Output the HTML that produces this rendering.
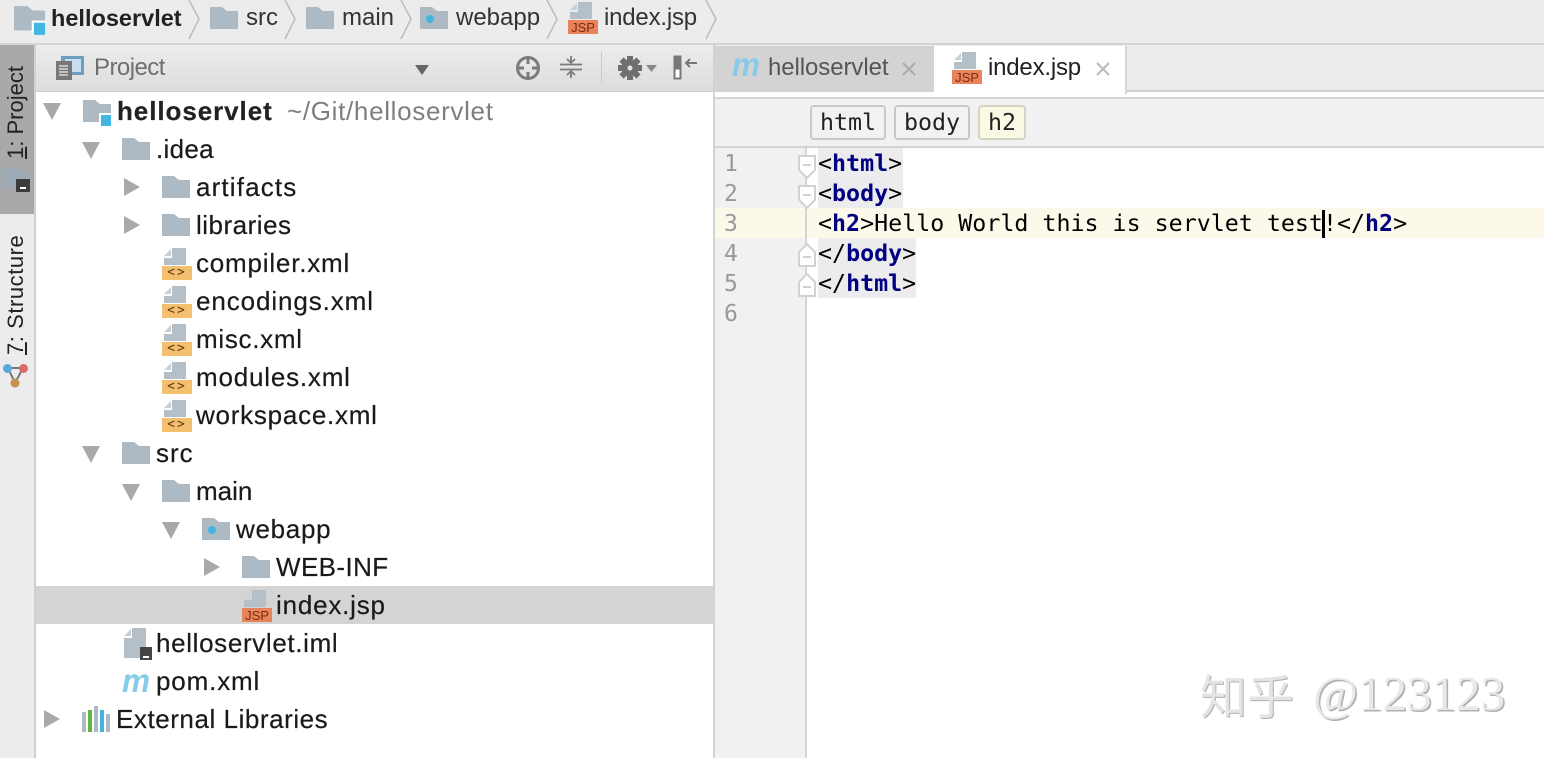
<!DOCTYPE html>
<html><head><meta charset="utf-8"><style>
html,body{margin:0;padding:0}
body{width:1544px;height:758px;overflow:hidden;background:#fff;position:relative;font-family:"Liberation Sans","Noto Sans CJK SC",sans-serif;color:#1c1c1c}
.a,.t,.c,.m,svg.i{position:absolute}
.a{display:block}
.t{font-size:26px;letter-spacing:.7px;line-height:38px;height:38px;white-space:nowrap;color:#1a1a1a;-webkit-text-stroke:.2px #1a1a1a}
.c{font-size:24px;line-height:30px;white-space:nowrap}
.m{font-family:"DejaVu Sans Mono",monospace;font-size:23.3px;line-height:30px;white-space:pre;color:#000}
.m b{color:#000080;font-weight:bold}
.n{position:absolute;left:724px;width:14px;font-family:"DejaVu Sans Mono",monospace;font-size:23px;line-height:30px;color:#999}
.tag{position:absolute;top:105px;height:35px;box-sizing:border-box;border:2px solid #c8c8c8;border-radius:4px;background:#f2f2f2;font-family:"DejaVu Sans Mono",monospace;font-size:23.3px;line-height:31px;text-align:center;color:#222}
.hl{position:absolute;background:#ececee}
.v{position:absolute;transform-origin:0 0;transform:rotate(-90deg);font-size:22px;line-height:26px;white-space:nowrap;color:#222}
.v u{text-decoration:underline}
.x{position:absolute;width:30px;height:14px;background:#f4bf6f;color:#5a3a10;font:13px/14px 'DejaVu Sans Mono',monospace;letter-spacing:2px;text-align:center}
.j{position:absolute;width:30px;height:14px;background:#e8835a;color:#7a2c10;font-size:13px;line-height:15px;text-align:center}
</style></head><body>
<svg width="0" height="0" style="position:absolute">
<defs>
<symbol id="fo" viewBox="0 0 28 22"><path d="M0 0H12L17 4H28V22H0Z" fill="#aebac3"/></symbol>
<symbol id="mod" viewBox="0 0 28 26"><path d="M0 0H12L17 4H28V22H0Z" fill="#aebac3"/><rect x="16" y="13" width="12" height="13" fill="#fff"/><rect x="18" y="15" width="10" height="11" fill="#40b6e0"/></symbol>
<symbol id="web" viewBox="0 0 28 22"><path d="M0 0H12L17 4H28V22H0Z" fill="#aebac3"/><circle cx="10" cy="12" r="4" fill="#40b6e0"/></symbol>
<symbol id="pg" viewBox="0 0 22 17"><path d="M8 0H22V17H0V10H8Z" fill="#b4bfc7"/><path d="M7 1V8H0Z" fill="#c9d1d7"/></symbol>
<symbol id="d" viewBox="0 0 18 17"><path d="M0 0H18L9 17Z" fill="#a9a9a9"/></symbol>
<symbol id="r" viewBox="0 0 16 18"><path d="M0 0L16 9L0 18Z" fill="#a9a9a9"/></symbol>
<symbol id="mm" viewBox="0 0 28 24"><text x="0" y="21" font-family="Liberation Sans" font-style="italic" font-weight="bold" font-size="33" fill="#86cbe8" textLength="28" lengthAdjust="spacingAndGlyphs">m</text></symbol>
<symbol id="fold1" viewBox="0 0 20 26"><path d="M2 2H18V16L10 24L2 16Z" fill="#fff" stroke="#d2d2d2" stroke-width="2"/><path d="M6 11H14" stroke="#d2d2d2" stroke-width="2"/></symbol>
<symbol id="fold2" viewBox="0 0 20 26"><path d="M2 24H18V10L10 2L2 10Z" fill="#fff" stroke="#d2d2d2" stroke-width="2"/><path d="M6 15H14" stroke="#d2d2d2" stroke-width="2"/></symbol>
</defs></svg>

<!-- top breadcrumb -->
<div class="a" style="left:0;top:0;width:1544px;height:45px;background:#ececec;border-bottom:2px solid #d4d4d4;box-sizing:border-box"></div>
<svg class="i" style="left:14px;top:6px" width="31" height="29"><use href="#mod" width="31" height="29"/></svg>
<div class="c" style="left:51px;top:3px;font-weight:bold;font-size:23.5px;color:#222">helloservlet</div>
<svg class="i" style="left:187px;top:0" width="14" height="40"><path d="M2 0L12 19L2 39" fill="none" stroke="#bcbcbc" stroke-width="1.5"/></svg>
<svg class="i" style="left:210px;top:7px" width="28" height="22"><use href="#fo" width="28" height="22"/></svg>
<div class="c" style="left:246px;top:3px;color:#333">src</div>
<svg class="i" style="left:283px;top:0" width="14" height="40"><path d="M2 0L12 19L2 39" fill="none" stroke="#bcbcbc" stroke-width="1.5"/></svg>
<svg class="i" style="left:306px;top:7px" width="28" height="22"><use href="#fo" width="28" height="22"/></svg>
<div class="c" style="left:342px;top:3px;color:#333">main</div>
<svg class="i" style="left:399px;top:0" width="14" height="40"><path d="M2 0L12 19L2 39" fill="none" stroke="#bcbcbc" stroke-width="1.5"/></svg>
<svg class="i" style="left:420px;top:7px" width="28" height="22"><use href="#web" width="28" height="22"/></svg>
<div class="c" style="left:456px;top:3px;color:#333">webapp</div>
<svg class="i" style="left:545px;top:0" width="14" height="40"><path d="M2 0L12 19L2 39" fill="none" stroke="#bcbcbc" stroke-width="1.5"/></svg>
<svg class="i" style="left:570px;top:2px" width="22" height="17"><use href="#pg" width="22" height="17"/></svg>
<div class="j" style="left:568px;top:20px">JSP</div>
<div class="c" style="left:604px;top:3px;color:#333;letter-spacing:-.2px">index.jsp</div>
<svg class="i" style="left:704px;top:0" width="14" height="40"><path d="M2 0L12 19L2 39" fill="none" stroke="#bcbcbc" stroke-width="1.5"/></svg>

<!-- left strip -->
<div class="a" style="left:0;top:45px;width:34px;height:713px;background:#ececec"></div>
<div class="a" style="left:0;top:45px;width:34px;height:169px;background:#a9a9a9"></div>
<div class="a" style="left:34px;top:45px;width:2px;height:713px;background:#d0d0d0"></div>
<div class="v" style="left:3px;top:159px"><u>1</u>: Project</div>
<div class="v" style="left:3px;top:355px;letter-spacing:.55px"><u>7</u>: Structure</div>
<svg class="i" style="left:2px;top:168px" width="28" height="24"><path d="M0 0H12L17 3H26V20H0Z" fill="#9eabb6"/><rect x="14" y="11" width="14" height="13" fill="#3c3c3c"/><rect x="18" y="19" width="6" height="2" fill="#fff"/></svg>
<svg class="i" style="left:2px;top:362px" width="28" height="28"><path d="M6 6H21L13 21Z" fill="none" stroke="#777" stroke-width="2"/><circle cx="5.500" cy="6.500" r="4.500" fill="#5aa9dc"/><circle cx="21.500" cy="6.500" r="4.500" fill="#e0696c"/><circle cx="13" cy="21" r="4.500" fill="#c8904f"/></svg>

<!-- project header -->
<div class="a" style="left:36px;top:45px;width:677px;height:47px;background:linear-gradient(#ededed,#dcdcdc);border-bottom:1px solid #cfcfcf;box-sizing:border-box"></div>
<svg class="i" style="left:55px;top:55px" width="30" height="26"><rect x="6" y="1" width="23" height="19" fill="#6d9dc0"/><rect x="10" y="4" width="16" height="13" fill="#c7dff0"/><rect x="1" y="6" width="16" height="19" fill="#777"/><path d="M4 11H13M4 14H13M4 17H13M4 20H13" stroke="#eee" stroke-width="1.200"/></svg>
<div class="c" style="left:94px;top:53px;color:#6f6f6f;letter-spacing:-.55px">Project</div>
<svg class="i" style="left:415px;top:65px" width="14" height="10"><path d="M0 0H14L7 10Z" fill="#666"/></svg>
<svg class="i" style="left:515px;top:55px" width="26" height="26" fill="none" stroke="#7a7a7a" stroke-width="3"><circle cx="13" cy="13" r="10.500"/><path d="M13 2V9M13 17V24M2 13H9M17 13H24"/></svg>
<svg class="i" style="left:558px;top:54px" width="26" height="26" fill="none" stroke="#7a7a7a" stroke-width="1.800"><path d="M2 10.500H24M2 15.500H24M13 2V8M13 18V24"/><path d="M9 5L13 9L17 5M9 21L13 17L17 21" stroke-width="1.600"/></svg>
<div class="a" style="left:601px;top:52px;width:1px;height:30px;background:#c9c9c9"></div>
<svg class="i" style="left:618px;top:56px" width="26" height="26"><g fill="#6f6f6f"><circle cx="12" cy="12" r="8.500"/><path d="M9 0H15V24H9ZM0 9H24V15H0Z"/><path d="M9 0H15V24H9ZM0 9H24V15H0Z" transform="rotate(45 12 12)"/></g><circle cx="12" cy="12" r="2.500" fill="#e4e4e4"/></svg>
<svg class="i" style="left:646px;top:65px" width="11" height="7"><path d="M0 0H11L5.500 7Z" fill="#888"/></svg>
<svg class="i" style="left:673px;top:55px" width="26" height="26"><rect x="1.500" y="1.500" width="6" height="22" fill="#fff" stroke="#777" stroke-width="2"/><rect x="1.500" y="1.500" width="6" height="13" fill="#777"/><path d="M24 8H13M17 4L13 8L17 12" fill="none" stroke="#777" stroke-width="2"/></svg>
<div class="a" style="left:713px;top:45px;width:2px;height:713px;background:#d2d2d2"></div>

<!-- tree -->
<div class="a" style="left:36px;top:586px;width:677px;height:38px;background:#d4d4d4"></div>

<svg class="i" style="left:43px;top:103px" width="18" height="17"><use href="#d" width="18" height="17"/></svg>
<svg class="i" style="left:82px;top:100px" width="30" height="26"><use href="#mod" width="30" height="26"/></svg>
<div class="t" style="left:117px;top:92px;font-weight:bold;color:#222;letter-spacing:.93px">helloservlet</div>
<div class="t" style="left:287px;top:92px;color:#7f7f7f;-webkit-text-stroke:0;letter-spacing:.68px">~/Git/helloservlet</div>

<svg class="i" style="left:82px;top:142px" width="18" height="17"><use href="#d" width="18" height="17"/></svg>
<svg class="i" style="left:122px;top:138px" width="28" height="22"><use href="#fo" width="28" height="22"/></svg>
<div class="t" style="left:156px;top:130px;letter-spacing:.3px">.idea</div>

<svg class="i" style="left:124px;top:178px" width="16" height="18"><use href="#r" width="16" height="18"/></svg>
<svg class="i" style="left:162px;top:176px" width="28" height="22"><use href="#fo" width="28" height="22"/></svg>
<div class="t" style="left:196px;top:168px;letter-spacing:1.15px">artifacts</div>

<svg class="i" style="left:124px;top:216px" width="16" height="18"><use href="#r" width="16" height="18"/></svg>
<svg class="i" style="left:162px;top:214px" width="28" height="22"><use href="#fo" width="28" height="22"/></svg>
<div class="t" style="left:196px;top:206px;letter-spacing:.5px">libraries</div>

<svg class="i" style="left:164px;top:248px" width="22" height="17"><use href="#pg" width="22" height="17"/></svg>
<div class="x" style="left:162px;top:266px">&lt;&gt;</div>
<div class="t" style="left:196px;top:244px;letter-spacing:.8px">compiler.xml</div>

<svg class="i" style="left:164px;top:286px" width="22" height="17"><use href="#pg" width="22" height="17"/></svg>
<div class="x" style="left:162px;top:304px">&lt;&gt;</div>
<div class="t" style="left:196px;top:282px;letter-spacing:.9px">encodings.xml</div>

<svg class="i" style="left:164px;top:324px" width="22" height="17"><use href="#pg" width="22" height="17"/></svg>
<div class="x" style="left:162px;top:342px">&lt;&gt;</div>
<div class="t" style="left:196px;top:320px">misc.xml</div>

<svg class="i" style="left:164px;top:362px" width="22" height="17"><use href="#pg" width="22" height="17"/></svg>
<div class="x" style="left:162px;top:380px">&lt;&gt;</div>
<div class="t" style="left:196px;top:358px;letter-spacing:.8px">modules.xml</div>

<svg class="i" style="left:164px;top:400px" width="22" height="17"><use href="#pg" width="22" height="17"/></svg>
<div class="x" style="left:162px;top:418px">&lt;&gt;</div>
<div class="t" style="left:196px;top:396px;letter-spacing:.75px">workspace.xml</div>

<svg class="i" style="left:82px;top:446px" width="18" height="17"><use href="#d" width="18" height="17"/></svg>
<svg class="i" style="left:122px;top:442px" width="28" height="22"><use href="#fo" width="28" height="22"/></svg>
<div class="t" style="left:156px;top:434px;letter-spacing:1px">src</div>

<svg class="i" style="left:122px;top:484px" width="18" height="17"><use href="#d" width="18" height="17"/></svg>
<svg class="i" style="left:162px;top:480px" width="28" height="22"><use href="#fo" width="28" height="22"/></svg>
<div class="t" style="left:196px;top:472px;letter-spacing:0">main</div>

<svg class="i" style="left:162px;top:522px" width="18" height="17"><use href="#d" width="18" height="17"/></svg>
<svg class="i" style="left:202px;top:518px" width="28" height="22"><use href="#web" width="28" height="22"/></svg>
<div class="t" style="left:236px;top:510px">webapp</div>

<svg class="i" style="left:204px;top:558px" width="16" height="18"><use href="#r" width="16" height="18"/></svg>
<svg class="i" style="left:242px;top:556px" width="28" height="22"><use href="#fo" width="28" height="22"/></svg>
<div class="t" style="left:276px;top:548px;letter-spacing:.4px">WEB-INF</div>

<svg class="i" style="left:244px;top:590px" width="22" height="17"><use href="#pg" width="22" height="17"/></svg>
<div class="j" style="left:242px;top:608px">JSP</div>
<div class="t" style="left:276px;top:586px;letter-spacing:.8px">index.jsp</div>

<svg class="i" style="left:124px;top:628px" width="30" height="32"><path d="M8 0H22V30H0V10H8Z" fill="#b4bfc7"/><path d="M7 1V8H0Z" fill="#c9d1d7"/><rect x="16" y="19" width="12" height="13" fill="#444"/><rect x="19" y="28" width="6" height="2" fill="#fff"/></svg>
<div class="t" style="left:156px;top:624px;letter-spacing:.65px">helloservlet.iml</div>

<svg class="i" style="left:122px;top:671px" width="28" height="24"><use href="#mm" width="28" height="24"/></svg>
<div class="t" style="left:156px;top:662px;letter-spacing:.85px">pom.xml</div>

<svg class="i" style="left:44px;top:710px" width="16" height="18"><use href="#r" width="16" height="18"/></svg>
<svg class="i" style="left:82px;top:706px" width="28" height="26"><rect x="0" y="6" width="4" height="20" fill="#aebac3"/><rect x="6" y="4" width="4" height="22" fill="#62b543"/><rect x="12" y="0" width="4" height="26" fill="#aebac3"/><rect x="18" y="4" width="4" height="22" fill="#40b6e0"/><rect x="24" y="8" width="4" height="18" fill="#aebac3"/></svg>
<div class="t" style="left:116px;top:700px;letter-spacing:.55px">External Libraries</div>

<!-- tabs -->
<div class="a" style="left:715px;top:45px;width:829px;height:47px;background:#ececec;border-bottom:2px solid #d0d0d0;box-sizing:border-box"></div>
<div class="a" style="left:715px;top:46px;width:219px;height:46px;background:#d3d3d3"></div>
<div class="a" style="left:934px;top:46px;width:193px;height:48px;background:#fff;border-right:2px solid #d8d8d8;box-sizing:border-box"></div>
<svg class="i" style="left:732px;top:55px" width="28" height="24"><use href="#mm" width="28" height="24"/></svg>
<div class="c" style="left:768px;top:53px;color:#555;letter-spacing:-.08px">helloservlet</div>
<svg class="i" style="left:902px;top:62px" width="14" height="14"><path d="M1 1L13 13M13 1L1 13" stroke="#aaa" stroke-width="2"/></svg>
<svg class="i" style="left:954px;top:52px" width="22" height="17"><use href="#pg" width="22" height="17"/></svg>
<div class="j" style="left:952px;top:70px">JSP</div>
<div class="c" style="left:988px;top:53px;color:#222;letter-spacing:-.2px">index.jsp</div>
<svg class="i" style="left:1096px;top:62px" width="14" height="14"><path d="M1 1L13 13M13 1L1 13" stroke="#bbb" stroke-width="2"/></svg>

<!-- editor breadcrumb -->
<div class="a" style="left:715px;top:97px;width:829px;height:51px;background:#f1f1f1;border-top:2px solid #d4d4d4;border-bottom:2px solid #d4d4d4;box-sizing:border-box"></div>
<div class="tag" style="left:810px;width:76px">html</div>
<div class="tag" style="left:894px;width:76px">body</div>
<div class="tag" style="left:978px;width:48px;background:#fbf9e3;border-color:#d4d4c4">h2</div>

<!-- gutter -->
<div class="a" style="left:715px;top:148px;width:91px;height:610px;background:#f1f1f1"></div>
<div class="a" style="left:715px;top:208px;width:829px;height:30px;background:#fdf9ea"></div>
<div class="a" style="left:805px;top:148px;width:2px;height:610px;background:#d4d4d4"></div>
<div class="n" style="top:149px">1</div>
<div class="n" style="top:179px">2</div>
<div class="n" style="top:209px">3</div>
<div class="n" style="top:239px">4</div>
<div class="n" style="top:269px">5</div>
<div class="n" style="top:299px">6</div>
<svg class="i" style="left:797px;top:154px" width="20" height="26"><use href="#fold1" width="20" height="26"/></svg>
<svg class="i" style="left:797px;top:184px" width="20" height="26"><use href="#fold1" width="20" height="26"/></svg>
<svg class="i" style="left:797px;top:242px" width="20" height="26"><use href="#fold2" width="20" height="26"/></svg>
<svg class="i" style="left:797px;top:272px" width="20" height="26"><use href="#fold2" width="20" height="26"/></svg>

<!-- code -->
<div class="hl" style="left:818px;top:148px;width:85px;height:60px"></div>
<div class="hl" style="left:818px;top:238px;width:98px;height:60px"></div>
<div class="m" style="left:818px;top:149px">&lt;<b>html</b>&gt;</div>
<div class="m" style="left:818px;top:179px">&lt;<b>body</b>&gt;</div>
<div class="m" style="left:818px;top:209px">&lt;<b>h2</b>&gt;Hello World this is servlet test!&lt;/<b>h2</b>&gt;</div>
<div class="m" style="left:818px;top:239px">&lt;/<b>body</b>&gt;</div>
<div class="m" style="left:818px;top:269px">&lt;/<b>html</b>&gt;</div>
<div class="a" style="left:1322px;top:210px;width:3px;height:28px;background:#000"></div>

<!-- watermark -->
<div class="a" style="left:1200px;top:664px;font-family:'Noto Sans CJK SC',sans-serif;font-size:47px;line-height:60px;color:#e4e4e4;text-shadow:1px 1px 0 #b0b0b0;white-space:nowrap">知乎</div>
<div class="a" style="left:1313px;top:664px;font-family:'Liberation Serif',serif;font-size:49px;line-height:60px;color:#e8e8e8;text-shadow:1.500px 1.500px 0 #b0b0b0;white-space:nowrap">@123123</div>
</body></html>
